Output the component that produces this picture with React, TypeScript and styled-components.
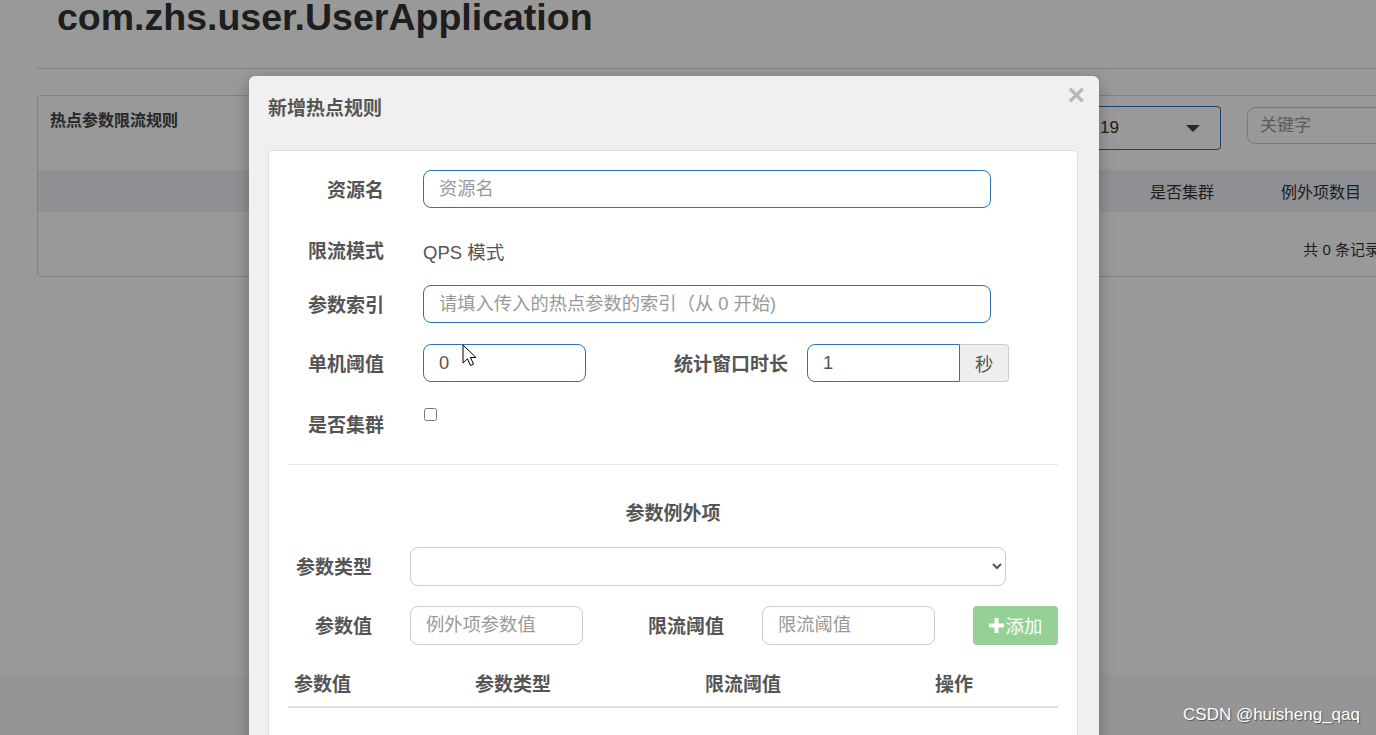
import React from "react";
import styled, { createGlobalStyle } from "styled-components";

const GlobalStyle = createGlobalStyle`
  html, body {
    margin: 0;
    padding: 0;
  }
  body {
    width: 1376px;
    height: 735px;
    overflow: hidden;
    background: #fff;
    color: #333;
    font-family: "Liberation Sans", "Noto Sans CJK SC", Arial, sans-serif;
  }
  * {
    box-sizing: border-box;
  }
`;

const Page = styled.div`
  position: relative;
  width: 1376px;
  height: 735px;
  overflow: hidden;
  display: flex;
  flex-direction: column;
`;

const Main = styled.div`
  flex: 1;
  padding-left: 37px;
`;

const AppTitle = styled.h1`
  margin: -3px 0 0 20px;
  font-size: 37.5px;
  line-height: 41px;
  font-weight: bold;
  color: #333;
  white-space: nowrap;
`;

const Rule = styled.div`
  margin-top: 30px;
  width: 1400px;
  border-top: 1px solid #d5d5d5;
`;

const Panel = styled.div`
  margin-top: 26px;
  width: 1380px;
  border: 1px solid #d8d8d8;
  border-radius: 4px;
  background: #fff;
`;

const PanelHead = styled.div`
  height: 74px;
  display: flex;
  align-items: flex-start;
  padding: 0 12px;
`;

const PanelTitle = styled.div`
  flex: 1;
  padding-top: 14px;
  font-size: 16px;
  line-height: 22px;
  font-weight: bold;
  color: #444;
`;

const AppSelect = styled.div`
  margin-top: 10px;
  width: 221px;
  height: 44px;
  border: 1px solid #2a6db0;
  border-radius: 4px;
  display: flex;
  align-items: center;
  justify-content: space-between;
  padding: 0 20px 0 99px;
  font-size: 17px;
  color: #333;
`;

const Caret = styled.span`
  width: 0;
  height: 0;
  border-left: 7px solid transparent;
  border-right: 7px solid transparent;
  border-top: 7px solid #444;
`;

const SearchInput = styled.input`
  margin: 11px 0 0 26px;
  width: 157px;
  height: 37px;
  border: 1px solid #ccc;
  border-radius: 8px;
  padding: 0 12px;
  font-family: inherit;
  font-size: 17px;
  color: #555;
  &::placeholder {
    color: #999;
  }
`;

const TableHead = styled.div`
  height: 42px;
  display: grid;
  grid-template-columns: 1112px 131px 1fr;
  align-items: center;
  background: #eef0f5;
  font-size: 16px;
  color: #333;
`;

const TableFoot = styled.div`
  height: 64px;
  display: flex;
  justify-content: flex-end;
  align-items: center;
  padding: 9px 36px 0 0;
  font-size: 15px;
  color: #333;
`;

const Footer = styled.div`
  height: 60px;
  background: #f8f8f8;
`;

const Backdrop = styled.div`
  position: absolute;
  inset: 0;
  background: rgba(0, 0, 0, 0.4);
`;

const Modal = styled.div`
  position: absolute;
  left: 249px;
  top: 76px;
  width: 850px;
  height: 700px;
  background: #f0f0f0;
  border-radius: 6px;
  box-shadow: 0 5px 15px rgba(0, 0, 0, 0.3);
`;

const ModalHeader = styled.div`
  height: 74px;
  display: flex;
  align-items: flex-start;
  padding: 0 14px 0 19px;
`;

const ModalTitle = styled.div`
  flex: 1;
  padding-top: 21px;
  font-size: 19px;
  line-height: 24px;
  font-weight: bold;
  color: #555;
`;

const Close = styled.span`
  margin-top: 4px;
  font-size: 30px;
  line-height: 30px;
  font-weight: bold;
  color: #b8b8b8;
  font-family: "Liberation Sans", Arial, sans-serif;
`;

const Card = styled.div`
  margin-left: 19px;
  width: 810px;
  height: 640px;
  background: #fff;
  border: 1px solid #ddd;
  border-radius: 4px;
  padding: 19px;
`;

const FormRow = styled.div<{ $mt?: number }>`
  display: flex;
  align-items: center;
  height: 38px;
  margin-top: ${(p) => p.$mt ?? 0}px;
`;

const Label = styled.label<{ $w?: number; $ml?: number; $mr?: number }>`
  width: ${(p) => (p.$w ? `${p.$w}px` : "auto")};
  margin-left: ${(p) => p.$ml ?? 0}px;
  margin-right: ${(p) => p.$mr ?? 39}px;
  padding-top: 4px;
  flex-shrink: 0;
  text-align: right;
  font-size: 19px;
  line-height: 24px;
  font-weight: bold;
  color: #555;
  white-space: nowrap;
`;

const Text = styled.span`
  padding-top: 2px;
  font-size: 18.5px;
  color: #555;
`;

const Input = styled.input<{ $w: number; $tone?: "blue" | "gray"; $flat?: boolean }>`
  width: ${(p) => p.$w}px;
  height: ${(p) => (p.$tone === "gray" ? 39 : 38)}px;
  border: 1px solid ${(p) => (p.$tone === "gray" ? "#ccc" : "#2d72b8")};
  border-radius: ${(p) => (p.$flat ? "8px 0 0 8px" : "8px")};
  padding: 0 15px;
  font-family: inherit;
  font-size: 18.3px;
  color: #555;
  background: #fff;
  outline: none;
  &::placeholder {
    color: #999;
  }
`;

const Addon = styled.span`
  width: 49px;
  height: 38px;
  display: flex;
  align-items: center;
  justify-content: center;
  background: #eee;
  border: 1px solid #ccc;
  border-left: 0;
  border-radius: 0 4px 4px 0;
  font-size: 18.3px;
  color: #555;
`;

const Check = styled.input`
  align-self: flex-start;
  margin: 3px 0 0 1px;
  width: 13px;
  height: 13px;
`;

const Divider = styled.div`
  margin-top: 21px;
  border-top: 1px solid #e5e5e5;
`;

const SectionTitle = styled.div`
  margin-top: 37px;
  text-align: center;
  font-size: 19px;
  line-height: 24px;
  font-weight: bold;
  color: #555;
`;

const Select = styled.select`
  width: 596px;
  height: 39px;
  border: 1px solid #ccc;
  border-radius: 8px;
  background: #fff;
  font-family: inherit;
  font-size: 17px;
  color: #555;
  padding: 0 8px;
`;

const AddButton = styled.button`
  margin-left: 38px;
  width: 85px;
  height: 39px;
  border: 0;
  border-radius: 4px;
  background: #95d195;
  color: #fff;
  font-family: inherit;
  font-size: 18.5px;
  display: flex;
  align-items: center;
  justify-content: center;
  gap: 2px;
  padding: 0;
`;

const RuleTable = styled.div`
  margin-top: 20px;
  display: grid;
  grid-template-columns: 181px 230px 230px 129px;
  border-bottom: 2px solid #ddd;
`;

const HeadCell = styled.div`
  padding: 9px 6px 9px;
  font-size: 19px;
  line-height: 24px;
  font-weight: bold;
  color: #555;
`;

const Watermark = styled.div`
  position: absolute;
  right: 16px;
  bottom: 10px;
  font-size: 17px;
  color: #fff;
  text-shadow: 1px 1px 1px #555;
`;

const Cursor = styled.svg`
  position: absolute;
  left: 462px;
  top: 344px;
`;

const PlusIcon = () => (
  <svg width="15" height="15" viewBox="0 0 15 15">
    <path d="M5.5 0h4v5.5H15v4H9.5V15h-4V9.5H0v-4h5.5z" fill="#fff" />
  </svg>
);

export default function App() {
  return (
    <Page>
      <GlobalStyle />
      <Main>
        <AppTitle>com.zhs.user.UserApplication</AppTitle>
        <Rule />
        <Panel>
          <PanelHead>
            <PanelTitle>热点参数限流规则</PanelTitle>
            <AppSelect>
              <span>19</span>
              <Caret />
            </AppSelect>
            <SearchInput placeholder="关键字" readOnly />
          </PanelHead>
          <TableHead>
            <span />
            <span>是否集群</span>
            <span>例外项数目</span>
          </TableHead>
          <TableFoot>共 0 条记录</TableFoot>
        </Panel>
      </Main>
      <Footer />

      <Backdrop />
      <Modal>
        <ModalHeader>
          <ModalTitle>新增热点规则</ModalTitle>
          <Close>×</Close>
        </ModalHeader>
        <Card>
          <FormRow>
            <Label $w={96}>资源名</Label>
            <Input $w={568} placeholder="资源名" readOnly />
          </FormRow>
          <FormRow $mt={23}>
            <Label $w={96}>限流模式</Label>
            <Text>QPS 模式</Text>
          </FormRow>
          <FormRow $mt={16}>
            <Label $w={96}>参数索引</Label>
            <Input $w={568} placeholder="请填入传入的热点参数的索引（从 0 开始)" readOnly />
          </FormRow>
          <FormRow $mt={21}>
            <Label $w={96}>单机阈值</Label>
            <Input $w={163} defaultValue="0" />
            <Label $ml={88} $mr={19}>统计窗口时长</Label>
            <Input $w={153} $flat defaultValue="1" />
            <Addon>秒</Addon>
          </FormRow>
          <FormRow $mt={23}>
            <Label $w={96}>是否集群</Label>
            <Check type="checkbox" />
          </FormRow>
          <Divider />
          <SectionTitle>参数例外项</SectionTitle>
          <FormRow $mt={21}>
            <Label $w={84} $mr={38}>参数类型</Label>
            <Select defaultValue="">
              <option value=""></option>
            </Select>
          </FormRow>
          <FormRow $mt={21}>
            <Label $w={84} $mr={38}>参数值</Label>
            <Input $w={173} $tone="gray" placeholder="例外项参数值" readOnly />
            <Label $ml={65} $mr={38}>限流阈值</Label>
            <Input $w={173} $tone="gray" placeholder="限流阈值" readOnly />
            <AddButton disabled>
              <PlusIcon />
              添加
            </AddButton>
          </FormRow>
          <RuleTable>
            <HeadCell>参数值</HeadCell>
            <HeadCell>参数类型</HeadCell>
            <HeadCell>限流阈值</HeadCell>
            <HeadCell>操作</HeadCell>
          </RuleTable>
        </Card>
      </Modal>
      <Cursor width="15" height="23" viewBox="0 0 15 23">
        <path d="M1 1v18l4.5-4.3 3 6.8 3-1.3-3-6.7H14z" fill="#fff" stroke="#000" strokeWidth="1" strokeLinejoin="round" />
      </Cursor>
      <Watermark>CSDN @huisheng_qaq</Watermark>
    </Page>
  );
}
